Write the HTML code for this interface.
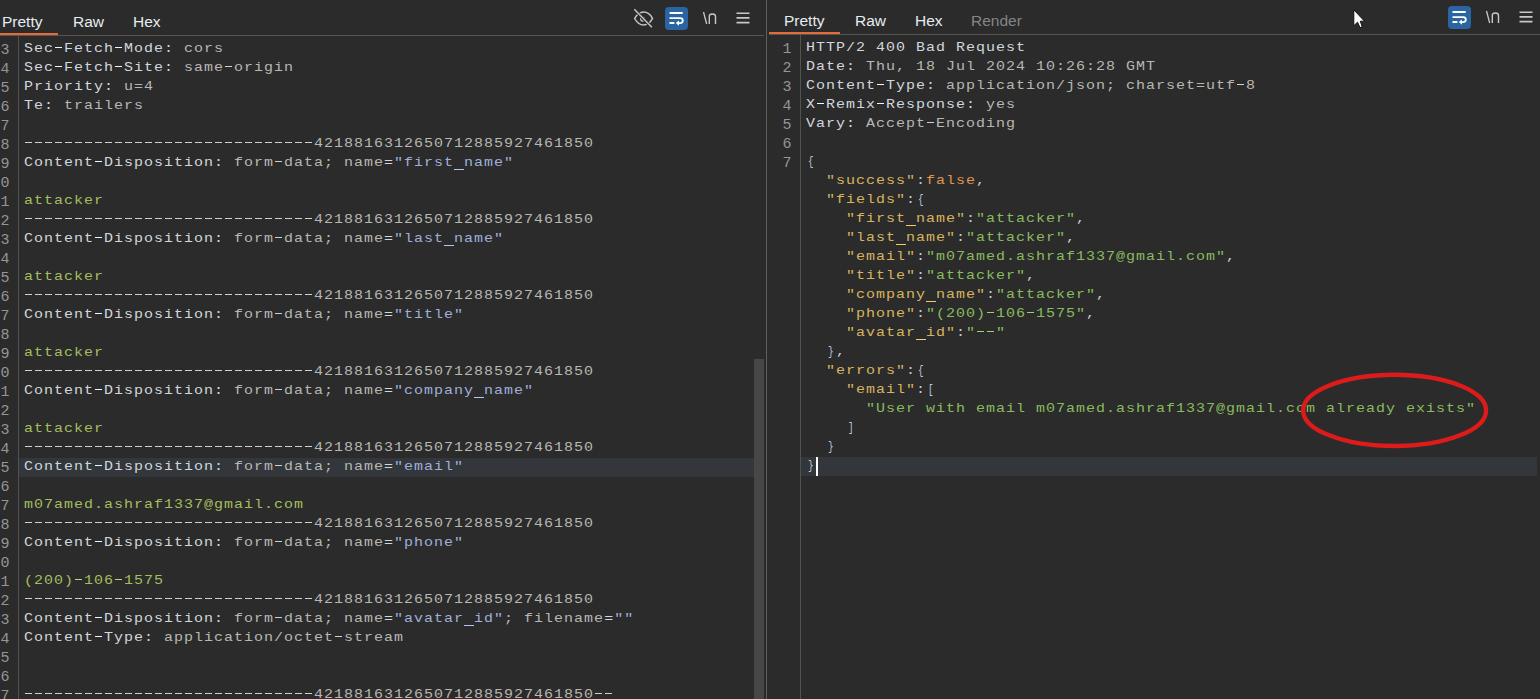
<!DOCTYPE html>
<html><head><meta charset="utf-8"><style>
*{margin:0;padding:0;box-sizing:border-box}
html,body{width:1540px;height:699px;overflow:hidden;background:#2b2b2b}
body{position:relative;font-family:"Liberation Sans",sans-serif}
.panel{position:absolute;top:0;height:699px;overflow:hidden}
.abs{position:absolute}
.tab{position:absolute;top:0;font-size:15.5px;line-height:19px;white-space:pre;color:#e6ebf0}
.code{position:absolute;font-family:"Liberation Mono",monospace;font-size:15px;letter-spacing:1.0px;line-height:19px;white-space:pre}
.nums{text-align:right;color:#959595;transform:none;line-height:19px} .nums .ln{height:19px;transform:none}
.n{color:#d1d7de} .v{color:#b7b7b4} .p{color:#d1d7de} .a{color:#9fafd9} .g{color:#a3be5f}
.k{color:#d6b45f} .s{color:#88bb5f} .f{color:#dd9751} .c{color:#c5ccd2} .b{color:#bbccdf;display:inline-block;transform:scaleX(0.62);transform-origin:5.2px 0}
.ln{height:19px;transform:scaleY(0.9);transform-origin:0 14px}
</style></head>
<body>
<div class="panel" style="left:-13px;top:1px;width:777px">
<div class="abs" style="left:0;top:32px;width:71px;height:2px;background:#e46b37"></div>
<div class="abs" style="left:0;top:34px;width:777px;height:1px;background:#555"></div>
<div class="abs" style="left:31px;top:35px;width:1px;height:700px;background:#515351"></div>
<div class="abs" style="left:32px;top:457px;width:735px;height:19px;background:#33363a"></div>
<div class="code nums" style="left:0;top:40px;width:23.5px"><div class="ln">3</div><div class="ln">4</div><div class="ln">5</div><div class="ln">6</div><div class="ln">7</div><div class="ln">8</div><div class="ln">9</div><div class="ln">0</div><div class="ln">1</div><div class="ln">2</div><div class="ln">3</div><div class="ln">4</div><div class="ln">5</div><div class="ln">6</div><div class="ln">7</div><div class="ln">8</div><div class="ln">9</div><div class="ln">0</div><div class="ln">1</div><div class="ln">2</div><div class="ln">3</div><div class="ln">4</div><div class="ln">5</div><div class="ln">6</div><div class="ln">7</div><div class="ln">8</div><div class="ln">9</div><div class="ln">0</div><div class="ln">1</div><div class="ln">2</div><div class="ln">3</div><div class="ln">4</div><div class="ln">5</div><div class="ln">6</div><div class="ln">7</div></div>
<div class="code" style="left:37px;top:38px"><div class="ln"><span class="n">Sec Fetch Mode:</span><span class="v"> cors</span></div><div class="ln"><span class="n">Sec Fetch Site:</span><span class="v"> same origin</span></div><div class="ln"><span class="n">Priority:</span><span class="v"> u=4</span></div><div class="ln"><span class="n">Te:</span><span class="v"> trailers</span></div><div class="ln"></div><div class="ln"><span class="v">                             4218816312650712885927461850</span></div><div class="ln"><span class="n">Content Disposition:</span><span class="v"> form data; name</span><span class="p">=</span><span class="a">"first name"</span></div><div class="ln"></div><div class="ln"><span class="g">attacker</span></div><div class="ln"><span class="v">                             4218816312650712885927461850</span></div><div class="ln"><span class="n">Content Disposition:</span><span class="v"> form data; name</span><span class="p">=</span><span class="a">"last name"</span></div><div class="ln"></div><div class="ln"><span class="g">attacker</span></div><div class="ln"><span class="v">                             4218816312650712885927461850</span></div><div class="ln"><span class="n">Content Disposition:</span><span class="v"> form data; name</span><span class="p">=</span><span class="a">"title"</span></div><div class="ln"></div><div class="ln"><span class="g">attacker</span></div><div class="ln"><span class="v">                             4218816312650712885927461850</span></div><div class="ln"><span class="n">Content Disposition:</span><span class="v"> form data; name</span><span class="p">=</span><span class="a">"company name"</span></div><div class="ln"></div><div class="ln"><span class="g">attacker</span></div><div class="ln"><span class="v">                             4218816312650712885927461850</span></div><div class="ln"><span class="n">Content Disposition:</span><span class="v"> form data; name</span><span class="p">=</span><span class="a">"email"</span></div><div class="ln"></div><div class="ln"><span class="g">m07amed.ashraf1337@gmail.com</span></div><div class="ln"><span class="v">                             4218816312650712885927461850</span></div><div class="ln"><span class="n">Content Disposition:</span><span class="v"> form data; name</span><span class="p">=</span><span class="a">"phone"</span></div><div class="ln"></div><div class="ln"><span class="g">(200) 106 1575</span></div><div class="ln"><span class="v">                             4218816312650712885927461850</span></div><div class="ln"><span class="n">Content Disposition:</span><span class="v"> form data; name</span><span class="p">=</span><span class="a">"avatar id"</span><span class="v">; filename</span><span class="p">=</span><span class="a">""</span></div><div class="ln"><span class="n">Content Type:</span><span class="v"> application/octet stream</span></div><div class="ln"></div><div class="ln"></div><div class="ln"><span class="v">                             4218816312650712885927461850  </span></div></div>
<div class="abs" style="left:68px;top:46px;width:7px;height:1px;background:repeating-linear-gradient(90deg,#eef5fe 0 7px,transparent 7px 10px)"></div><div class="abs" style="left:128px;top:46px;width:7px;height:1px;background:repeating-linear-gradient(90deg,#eef5fe 0 7px,transparent 7px 10px)"></div><div class="abs" style="left:68px;top:65px;width:7px;height:1px;background:repeating-linear-gradient(90deg,#eef5fe 0 7px,transparent 7px 10px)"></div><div class="abs" style="left:128px;top:65px;width:7px;height:1px;background:repeating-linear-gradient(90deg,#eef5fe 0 7px,transparent 7px 10px)"></div><div class="abs" style="left:238px;top:65px;width:7px;height:1px;background:repeating-linear-gradient(90deg,#d0d0cc 0 7px,transparent 7px 10px)"></div><div class="abs" style="left:38px;top:141px;width:287px;height:1px;background:repeating-linear-gradient(90deg,#d0d0cc 0 7px,transparent 7px 10px)"></div><div class="abs" style="left:108px;top:160px;width:7px;height:1px;background:repeating-linear-gradient(90deg,#eef5fe 0 7px,transparent 7px 10px)"></div><div class="abs" style="left:288px;top:160px;width:7px;height:1px;background:repeating-linear-gradient(90deg,#d0d0cc 0 7px,transparent 7px 10px)"></div><div class="abs" style="left:467px;top:168px;width:10px;height:1px;background:#b4c6f8"></div><div class="abs" style="left:38px;top:217px;width:287px;height:1px;background:repeating-linear-gradient(90deg,#d0d0cc 0 7px,transparent 7px 10px)"></div><div class="abs" style="left:108px;top:236px;width:7px;height:1px;background:repeating-linear-gradient(90deg,#eef5fe 0 7px,transparent 7px 10px)"></div><div class="abs" style="left:288px;top:236px;width:7px;height:1px;background:repeating-linear-gradient(90deg,#d0d0cc 0 7px,transparent 7px 10px)"></div><div class="abs" style="left:457px;top:244px;width:10px;height:1px;background:#b4c6f8"></div><div class="abs" style="left:38px;top:293px;width:287px;height:1px;background:repeating-linear-gradient(90deg,#d0d0cc 0 7px,transparent 7px 10px)"></div><div class="abs" style="left:108px;top:312px;width:7px;height:1px;background:repeating-linear-gradient(90deg,#eef5fe 0 7px,transparent 7px 10px)"></div><div class="abs" style="left:288px;top:312px;width:7px;height:1px;background:repeating-linear-gradient(90deg,#d0d0cc 0 7px,transparent 7px 10px)"></div><div class="abs" style="left:38px;top:369px;width:287px;height:1px;background:repeating-linear-gradient(90deg,#d0d0cc 0 7px,transparent 7px 10px)"></div><div class="abs" style="left:108px;top:388px;width:7px;height:1px;background:repeating-linear-gradient(90deg,#eef5fe 0 7px,transparent 7px 10px)"></div><div class="abs" style="left:288px;top:388px;width:7px;height:1px;background:repeating-linear-gradient(90deg,#d0d0cc 0 7px,transparent 7px 10px)"></div><div class="abs" style="left:487px;top:396px;width:10px;height:1px;background:#b4c6f8"></div><div class="abs" style="left:38px;top:445px;width:287px;height:1px;background:repeating-linear-gradient(90deg,#d0d0cc 0 7px,transparent 7px 10px)"></div><div class="abs" style="left:108px;top:464px;width:7px;height:1px;background:repeating-linear-gradient(90deg,#eef5fe 0 7px,transparent 7px 10px)"></div><div class="abs" style="left:288px;top:464px;width:7px;height:1px;background:repeating-linear-gradient(90deg,#d0d0cc 0 7px,transparent 7px 10px)"></div><div class="abs" style="left:38px;top:521px;width:287px;height:1px;background:repeating-linear-gradient(90deg,#d0d0cc 0 7px,transparent 7px 10px)"></div><div class="abs" style="left:108px;top:540px;width:7px;height:1px;background:repeating-linear-gradient(90deg,#eef5fe 0 7px,transparent 7px 10px)"></div><div class="abs" style="left:288px;top:540px;width:7px;height:1px;background:repeating-linear-gradient(90deg,#d0d0cc 0 7px,transparent 7px 10px)"></div><div class="abs" style="left:88px;top:578px;width:7px;height:1px;background:repeating-linear-gradient(90deg,#b8d868 0 7px,transparent 7px 10px)"></div><div class="abs" style="left:128px;top:578px;width:7px;height:1px;background:repeating-linear-gradient(90deg,#b8d868 0 7px,transparent 7px 10px)"></div><div class="abs" style="left:38px;top:597px;width:287px;height:1px;background:repeating-linear-gradient(90deg,#d0d0cc 0 7px,transparent 7px 10px)"></div><div class="abs" style="left:108px;top:616px;width:7px;height:1px;background:repeating-linear-gradient(90deg,#eef5fe 0 7px,transparent 7px 10px)"></div><div class="abs" style="left:288px;top:616px;width:7px;height:1px;background:repeating-linear-gradient(90deg,#d0d0cc 0 7px,transparent 7px 10px)"></div><div class="abs" style="left:477px;top:624px;width:10px;height:1px;background:#b4c6f8"></div><div class="abs" style="left:108px;top:635px;width:7px;height:1px;background:repeating-linear-gradient(90deg,#eef5fe 0 7px,transparent 7px 10px)"></div><div class="abs" style="left:348px;top:635px;width:7px;height:1px;background:repeating-linear-gradient(90deg,#d0d0cc 0 7px,transparent 7px 10px)"></div><div class="abs" style="left:38px;top:692px;width:287px;height:1px;background:repeating-linear-gradient(90deg,#d0d0cc 0 7px,transparent 7px 10px)"></div><div class="abs" style="left:608px;top:692px;width:17px;height:1px;background:repeating-linear-gradient(90deg,#d0d0cc 0 7px,transparent 7px 10px)"></div>
<div class="tab" style="left:15px;top:11px">Pretty</div><div class="tab" style="left:86px;top:11px">Raw</div><div class="tab" style="left:146px;top:11px">Hex</div><div class="abs" style="left:767px;top:358px;width:10px;height:400px;background:#474747"></div>
</div>
<div class="abs" style="left:766px;top:0;width:1px;height:699px;background:#5e5e5e"></div>
<div class="panel" style="left:769px;top:0px;width:778px">
<div class="abs" style="left:0;top:32px;width:71px;height:2px;background:#e46b37"></div>
<div class="abs" style="left:0;top:34px;width:778px;height:1px;background:#555"></div>
<div class="abs" style="left:31px;top:35px;width:1px;height:700px;background:#515351"></div>
<div class="abs" style="left:32px;top:457px;width:736px;height:19px;background:#33363a"></div>
<div class="code nums" style="left:0;top:40px;width:23.5px"><div class="ln">1</div><div class="ln">2</div><div class="ln">3</div><div class="ln">4</div><div class="ln">5</div><div class="ln">6</div><div class="ln">7</div><div class="ln"></div><div class="ln"></div><div class="ln"></div><div class="ln"></div><div class="ln"></div><div class="ln"></div><div class="ln"></div><div class="ln"></div><div class="ln"></div><div class="ln"></div><div class="ln"></div><div class="ln"></div><div class="ln"></div><div class="ln"></div><div class="ln"></div><div class="ln"></div></div>
<div class="code" style="left:37px;top:38px"><div class="ln"><span class="n">HTTP/2 400 Bad Request</span></div><div class="ln"><span class="n">Date:</span><span class="v"> Thu, 18 Jul 2024 10:26:28 GMT</span></div><div class="ln"><span class="n">Content Type:</span><span class="v"> application/json; charset=utf 8</span></div><div class="ln"><span class="n">X Remix Response:</span><span class="v"> yes</span></div><div class="ln"><span class="n">Vary:</span><span class="v"> Accept Encoding</span></div><div class="ln"></div><div class="ln"><span class="b">{</span></div><div class="ln"><span class="t">  </span><span class="k">"success"</span><span class="c">:</span><span class="f">false</span><span class="c">,</span></div><div class="ln"><span class="t">  </span><span class="k">"fields"</span><span class="c">:</span><span class="b">{</span></div><div class="ln"><span class="t">    </span><span class="k">"first name"</span><span class="c">:</span><span class="s">"attacker"</span><span class="c">,</span></div><div class="ln"><span class="t">    </span><span class="k">"last name"</span><span class="c">:</span><span class="s">"attacker"</span><span class="c">,</span></div><div class="ln"><span class="t">    </span><span class="k">"email"</span><span class="c">:</span><span class="s">"m07amed.ashraf1337@gmail.com"</span><span class="c">,</span></div><div class="ln"><span class="t">    </span><span class="k">"title"</span><span class="c">:</span><span class="s">"attacker"</span><span class="c">,</span></div><div class="ln"><span class="t">    </span><span class="k">"company name"</span><span class="c">:</span><span class="s">"attacker"</span><span class="c">,</span></div><div class="ln"><span class="t">    </span><span class="k">"phone"</span><span class="c">:</span><span class="s">"(200) 106 1575"</span><span class="c">,</span></div><div class="ln"><span class="t">    </span><span class="k">"avatar id"</span><span class="c">:</span><span class="s">"  "</span></div><div class="ln"><span class="t">  </span><span class="b">}</span><span class="c">,</span></div><div class="ln"><span class="t">  </span><span class="k">"errors"</span><span class="c">:</span><span class="b">{</span></div><div class="ln"><span class="t">    </span><span class="k">"email"</span><span class="c">:</span><span class="b">[</span></div><div class="ln"><span class="t">      </span><span class="s">"User with email m07amed.ashraf1337@gmail.com already exists"</span></div><div class="ln"><span class="t">    </span><span class="b">]</span></div><div class="ln"><span class="t">  </span><span class="b">}</span></div><div class="ln"><span class="b">}</span></div></div>
<div class="abs" style="left:108px;top:84px;width:7px;height:1px;background:repeating-linear-gradient(90deg,#eef5fe 0 7px,transparent 7px 10px)"></div><div class="abs" style="left:468px;top:84px;width:7px;height:1px;background:repeating-linear-gradient(90deg,#d0d0cc 0 7px,transparent 7px 10px)"></div><div class="abs" style="left:48px;top:103px;width:7px;height:1px;background:repeating-linear-gradient(90deg,#eef5fe 0 7px,transparent 7px 10px)"></div><div class="abs" style="left:108px;top:103px;width:7px;height:1px;background:repeating-linear-gradient(90deg,#eef5fe 0 7px,transparent 7px 10px)"></div><div class="abs" style="left:158px;top:122px;width:7px;height:1px;background:repeating-linear-gradient(90deg,#d0d0cc 0 7px,transparent 7px 10px)"></div><div class="abs" style="left:137px;top:225px;width:10px;height:1px;background:#f4cc68"></div><div class="abs" style="left:127px;top:244px;width:10px;height:1px;background:#f4cc68"></div><div class="abs" style="left:157px;top:301px;width:10px;height:1px;background:#f4cc68"></div><div class="abs" style="left:218px;top:312px;width:7px;height:1px;background:repeating-linear-gradient(90deg,#98d468 0 7px,transparent 7px 10px)"></div><div class="abs" style="left:258px;top:312px;width:7px;height:1px;background:repeating-linear-gradient(90deg,#98d468 0 7px,transparent 7px 10px)"></div><div class="abs" style="left:147px;top:339px;width:10px;height:1px;background:#f4cc68"></div><div class="abs" style="left:208px;top:331px;width:17px;height:1px;background:repeating-linear-gradient(90deg,#98d468 0 7px,transparent 7px 10px)"></div>
<div class="tab" style="left:15px;top:11px">Pretty</div><div class="tab" style="left:86px;top:11px">Raw</div><div class="tab" style="left:146px;top:11px">Hex</div><div class="tab" style="left:202px;top:11px;color:#858585">Render</div><div class="abs" style="left:47px;top:457px;width:2px;height:19px;background:#fff"></div>
</div>
<svg class="abs" style="left:630px;top:5px" width="28" height="26" viewBox="0 0 28 26">
<path d="M4.6 13.5C7 9.3 10 7.1 13.6 7.1C17.2 7.1 20.3 9.3 22.5 13.4C20.3 17.6 17.2 20 13.6 20C10 20 7 17.7 4.6 13.5Z" stroke="#c4c4c4" stroke-width="1.5" fill="none"/>
<circle cx="12.6" cy="14.1" r="1.9" stroke="#c4c4c4" stroke-width="1.3" fill="none"/>
<path d="M4.3 4.3L21.9 22.3" stroke="#2b2b2b" stroke-width="3.2"/>
<path d="M4.3 4.3L21.9 22.3" stroke="#c4c4c4" stroke-width="1.5"/>
</svg><svg class="abs" style="left:665px;top:7px" width="23" height="23" viewBox="0 0 23 23">
<rect x="0" y="0" width="23" height="23" rx="4" fill="#2a65a2"/>
<path d="M4.5 6H17.7M4.5 16H9.4" stroke="#fff" stroke-width="1.9"/>
<path d="M4.5 11.1H15.3A2.5 2.5 0 0 1 15.3 16.1H13" stroke="#fff" stroke-width="1.8" fill="none"/>
<path d="M10.8 16.1L14 13.4V18.8Z" fill="#fff"/>
</svg><svg class="abs" style="left:702px;top:11px" width="16" height="16" viewBox="0 0 16 16">
<path d="M1.5 1L4.7 13" stroke="#c8c8c8" stroke-width="1.3"/>
<path d="M7.3 13V5.5Q7.3 3 10.4 3Q13.5 3 13.5 5.5V13" stroke="#c8c8c8" stroke-width="1.4" fill="none"/>
</svg><svg class="abs" style="left:735.8px;top:12.1px" width="14" height="12" viewBox="0 0 14 12">
<path d="M0.5 1.2H13.5M0.5 5.9H13.5M0.5 10.6H13.5" stroke="#c8c8c8" stroke-width="1.6"/>
</svg>
<svg class="abs" style="left:1448px;top:6px" width="23" height="23" viewBox="0 0 23 23">
<rect x="0" y="0" width="23" height="23" rx="4" fill="#2a65a2"/>
<path d="M4.5 6H17.7M4.5 16H9.4" stroke="#fff" stroke-width="1.9"/>
<path d="M4.5 11.1H15.3A2.5 2.5 0 0 1 15.3 16.1H13" stroke="#fff" stroke-width="1.8" fill="none"/>
<path d="M10.8 16.1L14 13.4V18.8Z" fill="#fff"/>
</svg><svg class="abs" style="left:1485px;top:10px" width="16" height="16" viewBox="0 0 16 16">
<path d="M1.5 1L4.7 13" stroke="#c8c8c8" stroke-width="1.3"/>
<path d="M7.3 13V5.5Q7.3 3 10.4 3Q13.5 3 13.5 5.5V13" stroke="#c8c8c8" stroke-width="1.4" fill="none"/>
</svg><svg class="abs" style="left:1518.8px;top:11.1px" width="14" height="12" viewBox="0 0 14 12">
<path d="M0.5 1.2H13.5M0.5 5.9H13.5M0.5 10.6H13.5" stroke="#c8c8c8" stroke-width="1.6"/>
</svg>
<svg class="abs" style="left:0;top:0" width="1540" height="699"><ellipse cx="1394.6" cy="410.4" rx="91.5" ry="35.6" fill="none" stroke="#de1b1b" stroke-width="4.4"/></svg>
<svg class="abs" style="left:1353px;top:9px" width="14" height="22" viewBox="0 0 14 22"><path d="M0.8 0.8V16.8L4.5 13.2L7 18.6L9.2 17.7L7.3 12.2H11.5Z" fill="#fff" stroke="#111" stroke-width="1" stroke-linejoin="miter"/></svg>
</body></html>
